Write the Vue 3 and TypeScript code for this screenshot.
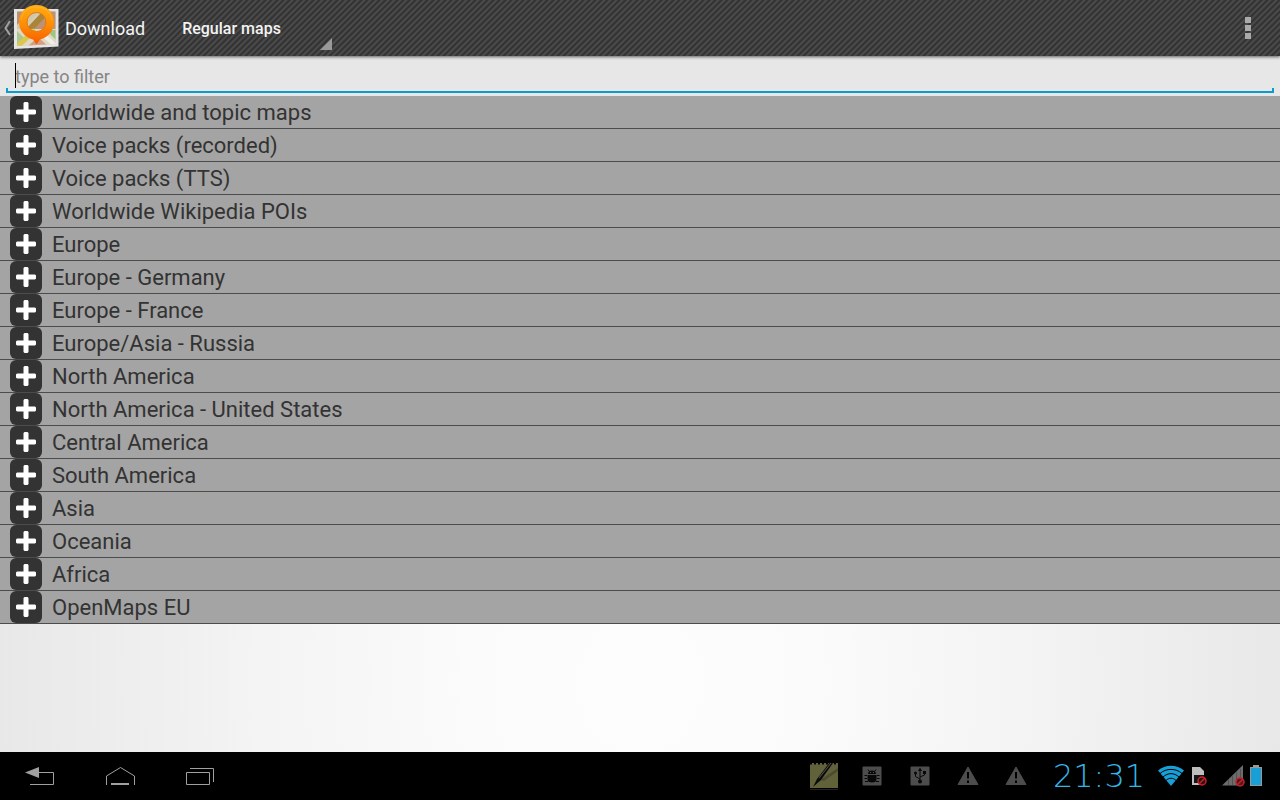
<script setup lang="ts">
import { computed, ref } from 'vue'

const mapType = ref('Regular maps')
const filter = ref('')
const groups: string[] = [
  'Worldwide and topic maps',
  'Voice packs (recorded)',
  'Voice packs (TTS)',
  'Worldwide Wikipedia POIs',
  'Europe',
  'Europe - Germany',
  'Europe - France',
  'Europe/Asia - Russia',
  'North America',
  'North America - United States',
  'Central America',
  'South America',
  'Asia',
  'Oceania',
  'Africa',
  'OpenMaps EU',
]
const shown = computed(() =>
  groups.filter((g) => g.toLowerCase().includes(filter.value.toLowerCase())),
)
</script>

<template>
  <div class="screen">
    <header class="action-bar">
      <button class="up" type="button" aria-label="Navigate up">
        <svg class="chevron" width="10" height="18" viewBox="0 0 10 18">
          <path d="M8 2L3.500 9L8 16" fill="none" stroke="#a2a2a2" stroke-width="2" />
        </svg>
        <svg width="48" height="48" viewBox="0 0 48 48">
          <defs>
            <linearGradient id="pin" x1="0" y1="0" x2="0" y2="1">
              <stop offset="0" stop-color="#ffae12" />
              <stop offset="0.5" stop-color="#ff8c06" />
              <stop offset="1" stop-color="#f55c00" />
            </linearGradient>
            <clipPath id="sheet"><path d="M5 7.500H43.500V40L5 42Z" /></clipPath>
          </defs>
          <path d="M2 5H46.500V42.500L2 45Z" fill="#e4e4e4" />
          <g clip-path="url(#sheet)">
            <path d="M4 7H45V43H4Z" fill="#d9cbb0" />
            <path d="M4 7H18L4 22Z" fill="#b98f72" />
            <path d="M17 25L35 7H45V25Z" fill="#bd9272" />
            <path d="M4 24L21 7H28L10 25Z" fill="#d1c6a8" />
            <path d="M18 25L34 8" stroke="#aa8438" stroke-width="6" />
            <path d="M4 25H45V43H4Z" fill="#ded9c4" />
            <path d="M4 26L12 34L4 41Z" fill="#a9c68c" />
            <path d="M5 43L23 26" stroke="#dcc650" stroke-width="5" />
            <path d="M15 43L26 33L37 43Z" fill="#d99d82" />
            <path d="M27 27L45 43" stroke="#f3eee4" stroke-width="4" />
            <path d="M34 26H45V37Z" fill="#9fc583" />
          </g>
          <path
            fill="url(#pin)"
            fill-rule="evenodd"
            d="M24.500 1C34.200 1 42 8.200 42 17.800C42 26.500 36.500 33.500 28 35.500L24.500 40.500L21 35.500C12.500 33.500 7 26.500 7 17.800C7 8.200 14.800 1 24.500 1ZM24.500 8.500A9.500 9.500 0 1 0 24.500 27.500A9.500 9.500 0 1 0 24.500 8.500Z"
          />
          <path d="M9 16C10 8 16 3 24.500 3S39 8 40 16" fill="none" stroke="#ffc04a" stroke-opacity="0.5" />
          <circle cx="24.500" cy="18" r="9.500" fill="none" stroke="#df7810" />
        </svg>
        <span class="title">Download</span>
      </button>
      <div class="spinner">
        <select v-model="mapType" aria-label="Map type">
          <option>Regular maps</option>
        </select>
      </div>
      <button class="overflow" type="button" aria-label="More options">
        <i></i><i></i><i></i>
      </button>
    </header>

    <main>
      <div class="search">
        <input v-model="filter" type="text" placeholder="type to filter" aria-label="Filter" />
        <span class="cursor"></span>
      </div>
      <ul class="groups">
        <li v-for="name in shown" :key="name">
          <button type="button">
            <svg width="32" height="32" viewBox="0 0 32 32" aria-hidden="true">
              <rect width="32" height="32" rx="6" fill="#333" />
              <path d="M14.500 6H17.500L18.500 7V13.500H25L26 14.500V17.500L25 18.500H18.500V25L17.500 26H14.500L13.500 25V18.500H7L6 17.500V14.500L7 13.500H13.500V7Z" fill="#fff" />
            </svg>
            <span>{{ name }}</span>
          </button>
        </li>
      </ul>
    </main>

    <footer class="system-bar">
      <nav>
        <button type="button" aria-label="Back">
          <svg width="32" height="24" viewBox="0 0 32 24">
            <path d="M1 8.500L15 3V14Z" fill="#a0a0a0" />
            <path d="M15 8.500H29.500V20.500H6" fill="none" stroke="#a0a0a0" />
          </svg>
        </button>
        <button type="button" aria-label="Home">
          <svg width="32" height="24" viewBox="0 0 32 24">
            <path d="M2.500 21V12L16.500 3.500L30.500 12V21" fill="none" stroke="#a0a0a0" />
            <path d="M7 20H25" stroke="#a0a0a0" stroke-width="2" />
          </svg>
        </button>
        <button type="button" aria-label="Recent apps">
          <svg width="32" height="24" viewBox="0 0 32 24">
            <path d="M2.500 8.500H25.500V20.500H2.500ZM6 4.500H29.500V18" fill="none" stroke="#a0a0a0" />
          </svg>
        </button>
      </nav>

      <div class="notices">
        <svg width="28" height="30" viewBox="0 0 28 30">
          <path d="M0 2H28V27H0Z" fill="#62623a" />
          <path d="M10 19L28 7V10L14 20Z" fill="#4c4c31" />
          <path d="M0 2.500H28" stroke="#000" stroke-width="2" stroke-dasharray="2 2" />
          <path d="M0 28.500H28" stroke="#222" />
          <path d="M3 26L7 18L20 1L23 2L11 19Z" fill="#0c0c0e" />
          <path d="M9 17L21 2" stroke="#555" />
        </svg>
        <svg width="20" height="20" viewBox="0 0 20 20">
          <rect x="0.500" y="0.500" width="19" height="19" rx="1" fill="#4d4d4d" />
          <g fill="#080808" stroke="#080808">
            <path d="M6 8A4 3.500 0 0 1 14 8Z" stroke="none" />
            <path d="M5.500 9H14.500V13Q14.500 16.500 10 16.500T5.500 13Z" stroke="none" />
            <path d="M6 3.500L8 6M14 3.500L12 6M2.500 9.500H5M2.500 12.500H5M3 15.500H6M15 9.500H17.500M15 12.500H17.500M14 15.500H17" />
          </g>
          <path d="M8 6.500H9M11 6.500H12" stroke="#555" />
        </svg>
        <svg width="20" height="20" viewBox="0 0 20 20">
          <rect x="0.500" y="0.500" width="19" height="19" rx="1" fill="#4d4d4d" />
          <path d="M10 3V16M10 13L5.500 10.500V7M10 11L14.500 9V6" fill="none" stroke="#080808" />
          <path d="M10 1.500L12 5H8ZM13 5H16V8H13Z" fill="#080808" />
          <circle cx="5.500" cy="7" r="1.500" fill="#080808" />
          <circle cx="10" cy="15.500" r="2" fill="#080808" />
        </svg>
        <svg v-for="n in 2" :key="n" width="22" height="20" viewBox="0 0 22 20">
          <path d="M11 1L21 18.500H1Z" fill="#4d4d4d" stroke="#4d4d4d" stroke-linejoin="round" />
          <path d="M11 6V12.500M11 14.500V17" stroke="#000" stroke-width="2" />
        </svg>
      </div>

      <time class="clock">21:31</time>

      <div class="status">
        <svg width="26" height="22" viewBox="0 0 26 22">
          <path d="M13 21L0 5.500C7 -1 19 -1 26 5.500Z" fill="#179fd6" />
          <path d="M2 8.500C8 3 18 3 24 8.500M5 12C10 7.500 16 7.500 21 12M8 15.500C11 12.500 15 12.500 18 15.500" fill="none" stroke="#000" />
        </svg>
        <svg width="16" height="22" viewBox="0 0 16 22">
          <path d="M0 2H8L12 6V20H0Z" fill="#bdbdbd" />
          <rect x="2" y="10" width="10" height="8" fill="#151515" />
          <circle cx="10" cy="16" r="4" fill="#301010" stroke="#c9202b" stroke-width="1.500" />
          <path d="M7 19L13 13" stroke="#c9202b" stroke-width="1.500" />
        </svg>
        <svg class="signal" width="24" height="22" viewBox="0 0 24 22">
          <path d="M0 20.500L21 0V20.500Z" fill="#6c6c6c" />
          <path d="M6.500 15V20M10.500 11V20M14.500 7.500V20M18.500 4V20" stroke="#525252" />
          <circle cx="18" cy="17" r="4" fill="#501a1c" stroke="#c9202b" stroke-width="1.500" />
          <path d="M15 20L21 14" stroke="#c9202b" stroke-width="1.500" />
        </svg>
        <svg width="12" height="22" viewBox="0 0 12 22">
          <path d="M3 0H9V2H12V21H0V2H3Z" fill="#989898" />
          <rect x="1" y="3" width="10" height="17" fill="#179fd6" />
        </svg>
      </div>
    </footer>
  </div>
</template>

<style>
body {
  margin: 0;
}
</style>

<style scoped>
.screen {
  min-height: 100vh;
  display: flex;
  flex-direction: column;
  font-family: Roboto, "Liberation Sans", sans-serif;
  background: #000;
}
button,
select,
input {
  font: inherit;
  color: inherit;
  border: 0;
  margin: 0;
  padding: 0;
  background: none;
}
svg {
  display: block;
  flex: none;
}
.action-bar {
  height: 56px;
  display: flex;
  align-items: stretch;
  color: #f3f3f3;
  background: linear-gradient(135deg, #333 0 20%, #4a4a4a 30% 45%, #333 55% 70%, #4a4a4a 80% 95%, #333 100%) 0 0 / 6px 6px;
  box-shadow: 0 1px 3px rgba(0, 0, 0, 0.6);
  position: relative;
  z-index: 1;
}
.up {
  display: flex;
  align-items: center;
  padding-left: 2px;
}
.title {
  font-size: 18px;
  padding-left: 5px;
}
.spinner {
  margin-left: 21px;
  width: 166px;
  position: relative;
}
.spinner::after {
  content: "";
  position: absolute;
  right: 0;
  bottom: 6px;
  border-left: 12px solid transparent;
  border-bottom: 12px solid #999;
}
.spinner select {
  appearance: none;
  width: 100%;
  height: 100%;
  padding-left: 16px;
  font-size: 16px;
  font-weight: 500;
  outline: none;
}
.overflow {
  margin-left: auto;
  width: 64px;
  display: flex;
  flex-direction: column;
  align-items: center;
  justify-content: center;
  gap: 2px;
}
.overflow i {
  width: 6px;
  height: 6px;
  background: #aaa;
}
main {
  flex: 1;
  background: radial-gradient(ellipse 52% 110% at 50% 90%, #fdfdfd 0, #fbfbfb 25%, #f3f3f3 60%, #e7e7e7 100%);
}
.search {
  position: relative;
  height: 40px;
  padding: 0 6px;
  display: flex;
  background: #e7e7e7;
}
.search::after {
  content: "";
  position: absolute;
  left: 6px;
  right: 6px;
  bottom: 3px;
  height: 3px;
  border: 2px solid #0a9bcf;
  border-top: 0;
}
.search input {
  flex: 1;
  padding-left: 9px;
  font-size: 18px;
  color: #333;
  caret-color: transparent;
  outline: none;
}
.search input::placeholder {
  color: #858585;
  opacity: 1;
}
.cursor {
  position: absolute;
  left: 15px;
  top: 7px;
  width: 1px;
  height: 25px;
  background: #000;
}
.groups {
  margin: 0;
  padding: 0;
  list-style: none;
}
.groups li {
  border-bottom: 1px solid #4c4c4c;
  background: #a4a4a4;
}
.groups button {
  width: 100%;
  height: 32px;
  display: flex;
  align-items: center;
  gap: 10px;
  padding-left: 10px;
  font-size: 22px;
  color: #333;
}
.system-bar {
  height: 48px;
  display: flex;
  align-items: center;
  background: #000;
}
nav {
  display: flex;
}
nav button {
  width: 80px;
  height: 48px;
  display: flex;
  align-items: center;
  justify-content: center;
}
.notices {
  margin-left: auto;
  display: grid;
  grid-template-columns: repeat(5, 48px);
  place-items: center;
}
.clock {
  width: 118px;
  text-align: center;
  font-family: "DejaVu Sans Light", "DejaVu Sans", sans-serif;
  font-weight: 200;
  font-size: 32px;
  line-height: 48px;
  color: #33b5e5;
}
.status {
  display: flex;
  align-items: center;
  gap: 8px;
  padding-right: 18px;
}
.signal {
  margin-left: 6px;
  margin-right: -4px;
}
</style>
